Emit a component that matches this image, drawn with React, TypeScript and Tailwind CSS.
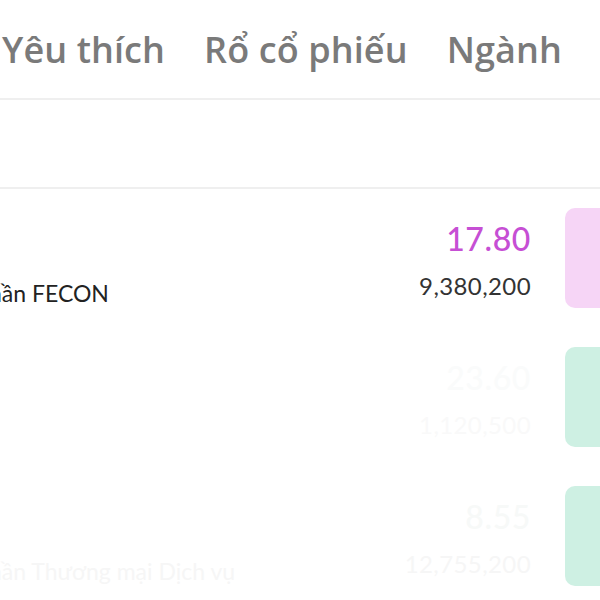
import React from 'react'

const tabs = ['Yêu thích', 'Rổ cổ phiếu', 'Ngành']

type Row = {
    name: string
    price: string
    volume: string
    priceColor: string
    volColor: string
    nameColor: string
    box: string
}

const rows: Row[] = [
    {
        name: 'Cổ phần FECON',
        price: '17.80',
        volume: '9,380,200',
        priceColor: 'text-[#c64fd4]',
        volColor: 'text-[#333333]',
        nameColor: 'text-[#222222]',
        box: 'bg-[#f6d5f6]',
    },
    {
        name: '',
        price: '23.60',
        volume: '1,120,500',
        priceColor: 'text-[#fafbfb]',
        volColor: 'text-[#f9f9f9]',
        nameColor: 'text-[#fbfbfb]',
        box: 'bg-[#cef0e3]',
    },
    {
        name: 'Cổ phần Thương mại Dịch vụ',
        price: '8.55',
        volume: '12,755,200',
        priceColor: 'text-[#f7f9f8]',
        volColor: 'text-[#f6f6f6]',
        nameColor: 'text-[#f6f6f6]',
        box: 'bg-[#cef0e3]',
    },
]

export default function App() {
    return (
        <div className="w-[600px] h-[600px] overflow-hidden bg-white" style={{ fontFamily: 'Lato, "Open Sans", sans-serif' }}>
            {/* Tabs */}
            <div
                className="h-[100px] border-b-2 border-[#efefef] flex items-center gap-[39px] pl-[2px] pt-[1px] whitespace-nowrap"
                style={{ fontFamily: '"Open Sans", Lato, sans-serif' }}
            >
                {tabs.map((t) => (
                    <span key={t} className="text-[36px] font-semibold text-[#7a7a7a] tracking-[0.1px]">
                        {t}
                    </span>
                ))}
            </div>

            {/* Empty search strip */}
            <div className="h-[89px] border-b-2 border-[#efefef]" />

            {/* Stock rows */}
            {rows.map((r, i) => (
                <div key={i} className="h-[139px] flex items-start pt-[19px]">
                    <div className="flex-1 min-w-0 overflow-hidden h-[102px] flex flex-col justify-end">
                        <span className={`-ml-[58px] text-[23px] whitespace-nowrap ${r.nameColor}`}>{r.name}</span>
                    </div>
                    <div className="w-[200px] flex flex-col items-end pt-[11px]">
                        <span className={`text-[32px] font-medium leading-[40px] tracking-[0.6px] ${r.priceColor}`}>{r.price}</span>
                        <span className={`mt-[12px] text-[24px] leading-[30px] tracking-[0.4px] ${r.volColor}`}>{r.volume}</span>
                    </div>
                    <div className={`ml-[34px] w-[35px] h-[100px] rounded-l-[10px] shrink-0 ${r.box}`} />
                </div>
            ))}
        </div>
    )
}
